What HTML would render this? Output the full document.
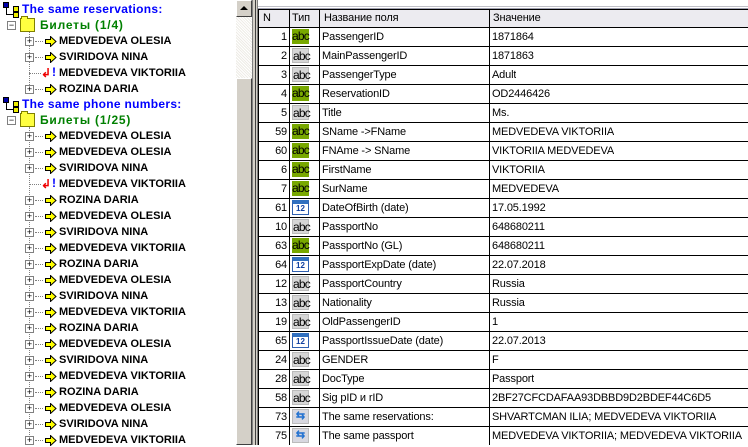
<!DOCTYPE html>
<html><head><meta charset="utf-8"><style>
*{margin:0;padding:0;box-sizing:border-box}
body{width:748px;height:445px;overflow:hidden;background:#fff;position:relative;font-family:"Liberation Sans",Arial,sans-serif}
.t{position:absolute;font-size:11px;font-weight:bold;white-space:nowrap;line-height:14px}
.blue{color:#0000ff;font-size:12px;letter-spacing:0.3px}.green{color:#008000;font-size:12px;letter-spacing:0.8px}
.ic{position:absolute}
.pl{position:absolute;width:9px;height:9px;border:1px solid #808080;background:#fff;font-size:9px;line-height:7px;text-align:center;color:#000;font-weight:normal}
.dl{position:absolute;border-top:1px dotted #808080;height:0}
.dv{position:absolute;border-left:1px dotted #808080;width:0}
.cell{position:absolute;font-size:11px;line-height:18px;white-space:nowrap;color:#000;overflow:hidden;letter-spacing:-0.15px}
.hl{position:absolute;left:258px;width:490px;height:1px;background:#000}
.vl{position:absolute;top:9px;bottom:0;width:1px;background:#000}
.badge{position:absolute;left:292px;width:17px;height:15px;font-size:12px;line-height:14px;text-align:center;letter-spacing:-0.8px}
.g{background:#78a800;color:#000}
.gr{background:#d6d6d6;color:#000;border:1px solid #bbb}
</style></head><body>

<div style="position:absolute;left:236px;top:0;width:16px;height:445px;background:#e8e6e0"></div>
<div style="position:absolute;left:236px;top:17px;width:16px;height:61px;background:repeating-linear-gradient(45deg,#eeece6 0 1px,#fff 1px 2px)"></div>
<div style="position:absolute;left:236px;top:0;width:16px;height:17px;background:#d4d0c8;border:1px solid;border-color:#fff #404040 #404040 #fff"></div>
<div style="position:absolute;left:240px;top:6px;width:0;height:0;border-left:4px solid transparent;border-right:4px solid transparent;border-bottom:4px solid #000"></div>
<div style="position:absolute;left:236px;top:78px;width:16px;height:367px;background:#d4d0c8;border:1px solid;border-color:#fff #404040 #404040 #fff"></div>
<div style="position:absolute;left:252px;top:0;width:6px;height:445px;background:#d4d0c8;border-left:1px solid #808080;border-right:1px solid #808080"></div>
<div style="position:absolute;left:255px;top:0;width:1px;height:445px;background:#404040"></div>
<div style="position:absolute;left:258px;top:0;width:490px;height:9px;background:#fff;border-bottom:1px solid #a0a0b0"></div>
<div style="position:absolute;left:258px;top:6px;width:490px;height:1px;background:#c0c0c8"></div>

<div style="position:absolute;left:258px;top:9px;width:490px;height:18px;background:#ecebf0"></div>

<div id="tree"></div>
<div id="tbl"></div>

<script>
var tree=document.getElementById('tree'),h='';
function hdr(y,txt){
 h+='<div class="ic" style="left:3px;top:'+(y-7)+'px;width:18px;height:16px">'+
 '<div style="position:absolute;left:0;top:0;width:6px;height:6px;background:#00a;border:1px solid #000"></div>'+
 '<div style="position:absolute;left:10px;top:4px;width:6px;height:6px;background:#ee0;border:1px solid #000"></div>'+
 '<div style="position:absolute;left:10px;top:10px;width:6px;height:6px;background:#ee0;border:1px solid #000"></div>'+
 '<div style="position:absolute;left:3px;top:6px;width:1px;height:7px;background:#000"></div>'+
 '<div style="position:absolute;left:3px;top:12px;width:7px;height:1px;background:#000"></div></div>';
 h+='<div class="t blue" style="left:22px;top:'+(y-7)+'px">'+txt+'</div>';
}
function fold(y,txt){
 h+='<div class="pl" style="left:7px;top:'+(y-4)+'px">−</div>';
 h+='<div class="ic" style="left:20px;top:'+(y-7)+'px;width:15px;height:14px;background:#ffff40;border:1px solid #808000"></div>';
 h+='<div style="position:absolute;left:21px;top:'+(y-9)+'px;width:7px;height:3px;background:#ffff40;border:1px solid #808000;border-bottom:none"></div>';
 h+='<div class="t green" style="left:40px;top:'+(y-7)+'px">'+txt+'</div>';
}
function item(y,txt,red){
 if(red){
  h+='<div class="dl" style="left:29px;top:'+y+'px;width:12px"></div>';
  h+='<div class="ic" style="left:41px;top:'+(y-5)+'px;color:#e00;font-size:12px;line-height:10px;font-weight:bold">&#x21B2;</div>';
  h+='<div class="ic" style="left:52px;top:'+(y-7)+'px;color:#00f;font-size:12px;font-weight:bold;line-height:13px">!</div>';
 } else {
  h+='<div class="pl" style="left:25px;top:'+(y-4)+'px">+</div>';
  h+='<div class="dl" style="left:35px;top:'+y+'px;width:8px"></div>';
  h+='<svg class="ic" style="left:45px;top:'+(y-5)+'px" width="12" height="11"><path d="M0.5 3.5H5.5V0.5L11 5.5L5.5 10.5V7.5H0.5Z" fill="#ff0" stroke="#000"/></svg>';
 }
 h+='<div class="t" style="left:59px;top:'+(y-7)+'px">'+txt+'</div>';
}
hdr(9,'The same reservations:');
fold(25,'Билеты (1/4)');
h+='<div class="dv" style="left:29px;top:32px;height:53px"></div>';
item(41,'MEDVEDEVA OLESIA');item(57,'SVIRIDOVA NINA');item(73,'MEDVEDEVA VIKTORIIA',1);item(89,'ROZINA DARIA');
hdr(104,'The same phone numbers:');
fold(120,'Билеты (1/25)');
h+='<div class="dv" style="left:29px;top:127px;height:318px"></div>';
var names=['MEDVEDEVA OLESIA','MEDVEDEVA OLESIA','SVIRIDOVA NINA','MEDVEDEVA VIKTORIIA','ROZINA DARIA'];
var cyc=['MEDVEDEVA OLESIA','SVIRIDOVA NINA','MEDVEDEVA VIKTORIIA','ROZINA DARIA'];
for(var i=0;i<20;i++){var n=i<5?names[i]:cyc[(i-5)%4];item(136+i*16,n,i==3);}
tree.innerHTML=h;

var rows=[[1,'g','PassengerID','1871864'],[2,'gr','MainPassengerID','1871863'],[3,'gr','PassengerType','Adult'],[4,'g','ReservationID','OD2446426'],[5,'gr','Title','Ms.'],[59,'g','SName -&gt;FName','MEDVEDEVA VIKTORIIA'],[60,'g','FNAme -&gt; SName','VIKTORIIA MEDVEDEVA'],[6,'g','FirstName','VIKTORIIA'],[7,'g','SurName','MEDVEDEVA'],[61,'c','DateOfBirth (date)','17.05.1992'],[10,'gr','PassportNo','648680211'],[63,'g','PassportNo (GL)','648680211'],[64,'c','PassportExpDate (date)','22.07.2018'],[12,'gr','PassportCountry','Russia'],[13,'gr','Nationality','Russia'],[19,'gr','OldPassengerID','1'],[65,'c','PassportIssueDate (date)','22.07.2013'],[24,'gr','GENDER','F'],[28,'gr','DocType','Passport'],[58,'gr','Sig pID и rID','2BF27CFCDAFAA93DBBD9D2BDEF44C6D5'],[73,'a','The same reservations:','SHVARTCMAN ILIA; MEDVEDEVA VIKTORIIA'],[75,'a','The same passport','MEDVEDEVA VIKTORIIA; MEDVEDEVA VIKTORIIA']];
var t='';
t+='<div class="cell" style="left:263px;top:9px">N</div><div class="cell" style="left:292px;top:9px">Тип</div><div class="cell" style="left:324px;top:9px">Название поля</div><div class="cell" style="left:493px;top:9px">Значение</div>';
t+='<div class="hl" style="top:9px"></div>';
for(var i=0;i<rows.length;i++){
 var r=rows[i],y=27+i*19;
 t+='<div class="hl" style="top:'+y+'px"></div>';
 t+='<div class="cell" style="left:258px;width:29px;text-align:right;top:'+(y+1)+'px">'+r[0]+'</div>';
 if(r[1]=='g'||r[1]=='gr') t+='<div class="badge '+r[1]+'" style="top:'+(y+2)+'px">abc</div>';
 else if(r[1]=='c') t+='<div class="badge" style="top:'+(y+2)+'px;background:#fff;border:1px solid #3060b0;border-top:4px solid #3070c0;color:#1040a0;font-size:8px;line-height:9px;font-weight:bold;letter-spacing:0">12</div>';
 else t+='<div class="badge" style="top:'+(y+2)+'px;background:#d8d8e0;border:1px solid #bbb;color:#2070d0;font-size:11px;line-height:13px;font-weight:bold;letter-spacing:0">&#8646;</div>';
 t+='<div class="cell" style="left:322px;top:'+(y+1)+'px">'+r[2]+'</div>';
 t+='<div class="cell" style="left:492px;top:'+(y+1)+'px">'+r[3]+'</div>';
}
t+='<div class="vl" style="left:258px"></div><div class="vl" style="left:289px"></div><div class="vl" style="left:319px"></div><div class="vl" style="left:489px"></div>';
document.getElementById('tbl').innerHTML=t;
</script>
</body></html>
